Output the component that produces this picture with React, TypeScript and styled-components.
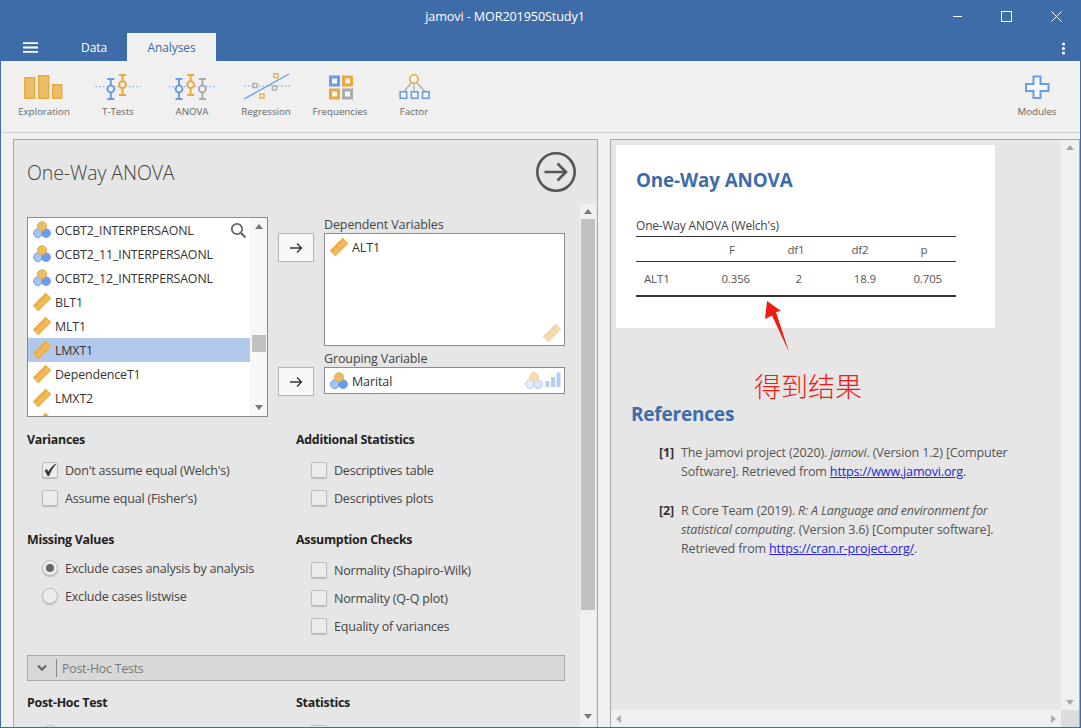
import React from "react";
import styled, { createGlobalStyle } from "styled-components";

const BLUE = "#3e6ca8";
const ORANGE = "#e9a93f";
const ORANGE_FILL = "#ebbd68";
const ICON_BLUE = "#6b9ce8";
const GREY = "#ababab";
const FONT = `"Open Sans", "Noto Sans", "Liberation Sans", sans-serif`;

const Global = createGlobalStyle`
  html, body { margin: 0; padding: 0; background: #f0f0f0; }
  body { font-family: ${FONT}; }
  * { box-sizing: border-box; }
`;

const Window = styled.div`
  width: 1081px;
  height: 728px;
  display: flex;
  flex-direction: column;
  overflow: hidden;
  border: 1px solid ${BLUE};
  border-top: none;
  background: #f0f0f0;
`;

const TitleBar = styled.div`
  height: 33px;
  background: ${BLUE};
  margin: 0 -1px;
  display: flex;
  align-items: center;
  position: relative;
  justify-content: center;
  padding-right: 71px;
  color: #fff;
  font-size: 12.6px;
  letter-spacing: -0.1px;
`;

const WindowButtons = styled.div`
  position: absolute;
  right: 0;
  top: 0;
  display: flex;
`;

const WindowButton = styled.div`
  width: 49.5px;
  height: 33px;
  display: flex;
  align-items: center;
  justify-content: center;
`;

const TabBar = styled.div`
  height: 28px;
  background: ${BLUE};
  margin: 0 -1px;
  display: flex;
  align-items: stretch;
  position: relative;
`;

const Hamburger = styled.div`
  width: 61px;
  display: flex;
  align-items: center;
  justify-content: center;
`;

const Tab = styled.div<{ $active?: boolean }>`
  width: ${(p) => (p.$active ? 89 : 66)}px;
  display: flex;
  align-items: center;
  justify-content: center;
  font-size: 12px;
  letter-spacing: -0.1px;
  color: ${(p) => (p.$active ? BLUE : "#fff")};
  background: ${(p) => (p.$active ? "#f0f0f0" : "transparent")};
`;

const Kebab = styled.div`
  position: absolute;
  right: 15px;
  top: 9px;
  display: flex;
`;

const Ribbon = styled.div`
  height: 72px;
  flex-shrink: 0;
  display: flex;
  padding: 0 6px;
  background: #f0f0f0;
  border-bottom: 1px solid #cfcfcf;
`;

const RibbonItem = styled.div`
  width: 74px;
  padding-top: 9px;
  display: flex;
  flex-direction: column;
  align-items: center;
  color: #666;
  font-size: 9.8px;
  line-height: 14px;
  letter-spacing: -0.05px;
  white-space: nowrap;
  svg { display: block; margin-bottom: 3px; }
`;

const RibbonSpacer = styled.div`
  flex: 1;
`;

const Main = styled.div`
  flex: 1;
  min-height: 0;
  display: flex;
  padding: 6px 0 0 12px;
  gap: 12px;
`;

const OptionsPanel = styled.section`
  width: 585px;
  display: flex;
  flex-direction: column;
  background: #e6e6e6;
  border: 1px solid #aaa;
  border-bottom: none;
  overflow: hidden;
`;

const OptionsHeader = styled.header`
  height: 64px;
  flex-shrink: 0;
  display: flex;
  align-items: center;
  justify-content: space-between;
  padding: 0 20px 1px 13px;
`;

const PanelTitle = styled.h1`
  margin: 1px 0 0;
  font-size: 19.5px;
  font-weight: 300;
  color: #444;
  letter-spacing: -0.1px;
`;

const OptionsBody = styled.div`
  flex: 1;
  min-height: 0;
  display: flex;
`;

const OptionsContent = styled.div`
  width: 567px;
  padding: 13px 0 0 13px;
  overflow: hidden;
`;

const ScrollTrack = styled.div`
  width: 16px;
  position: relative;
  background: #f0f0f0;
  margin-right: 1px;
`;

const ScrollThumb = styled.div<{ $top: number; $h: number; $x?: number }>`
  position: absolute;
  left: ${(p) => p.$x ?? 1}px;
  right: 1px;
  top: ${(p) => p.$top}px;
  height: ${(p) => p.$h}px;
  background: #c1c1c1;
`;

const ArrowGlyph = styled.div<{ $dir: "up" | "down" | "left" | "right"; $pos: string }>`
  position: absolute;
  width: 0;
  height: 0;
  ${(p) => p.$pos};
  border-style: solid;
  ${(p) =>
    p.$dir === "up"
      ? "border-width: 0 4px 5px 4px; border-color: transparent transparent #777 transparent;"
      : p.$dir === "down"
      ? "border-width: 5px 4px 0 4px; border-color: #777 transparent transparent transparent;"
      : p.$dir === "right"
      ? "border-width: 4px 0 4px 5px; border-color: transparent transparent transparent #aaa;"
      : "border-width: 4px 5px 4px 0; border-color: transparent #aaa transparent transparent;"}
`;

const VariableArea = styled.div`
  display: flex;
  gap: 10px;
  align-items: flex-start;
`;

const VariableList = styled.div`
  width: 241px;
  height: 200px;
  position: relative;
  overflow: hidden;
  border: 1px solid #8c8c8c;
  background: #fff;
`;

const VarRow = styled.div<{ $selected?: boolean }>`
  width: 222px;
  height: 24px;
  display: flex;
  align-items: center;
  gap: 4px;
  padding-left: 5px;
  font-size: 12.4px;
  letter-spacing: -0.12px;
  color: #333;
  background: ${(p) => (p.$selected ? "#b3c9ec" : "transparent")};
  white-space: nowrap;
`;

const ListScroll = styled.div`
  position: absolute;
  right: 0;
  top: 0;
  bottom: 0;
  width: 17px;
  background: #f7f7f7;
`;

const SearchSpot = styled.div`
  position: absolute;
  left: 202px;
  top: 4px;
  display: flex;
`;

const Targets = styled.div`
  display: grid;
  grid-template-columns: 36px 241px;
  column-gap: 10px;
  margin-top: -1px;
`;

const TargetLabel = styled.div`
  grid-column: 2;
  height: 17px;
  line-height: 18px;
  font-size: 12.5px;
  letter-spacing: -0.12px;
  color: #444;
`;

const TransferButton = styled.div`
  grid-column: 1;
  height: 29px;
  display: flex;
  align-items: center;
  justify-content: center;
  background: #f8f8f8;
  border: 1px solid #b4b4b4;
  color: #333;
`;

const TargetBox = styled.div<{ $h: number; $mb?: number }>`
  grid-column: 2;
  height: ${(p) => p.$h}px;
  margin-bottom: ${(p) => p.$mb ?? 0}px;
  position: relative;
  display: flex;
  align-items: flex-start;
  gap: 4px;
  padding: 4px 5px;
  background: #fff;
  border: 1px solid #8c8c8c;
  font-size: 12.5px;
  letter-spacing: -0.12px;
  color: #333;
  line-height: 20px;
`;

const BoxHint = styled.div<{ $top: number }>`
  position: absolute;
  right: 3px;
  top: ${(p) => p.$top}px;
  display: flex;
  gap: 2px;
  opacity: 0.5;
`;

const SectionGrid = styled.div<{ $mt?: number }>`
  display: grid;
  grid-template-columns: 269px 269px;
  row-gap: 19px;
  margin-top: ${(p) => p.$mt ?? 14}px;
`;

const Section = styled.div``;

const SectionTitle = styled.div`
  height: 16px;
  line-height: 18px;
  font-size: 12.4px;
  font-weight: 700;
  letter-spacing: -0.27px;
  color: #222;
`;

const OptionGroup = styled.div<{ $mt: number }>`
  margin-top: ${(p) => p.$mt}px;
  padding-left: 15px;
`;

const OptionRow = styled.div`
  height: 28px;
  display: flex;
  align-items: center;
  gap: 7px;
  font-size: 12.5px;
  letter-spacing: -0.2px;
  color: #444;
  white-space: nowrap;
`;

const CheckBox = styled.div`
  width: 16px;
  height: 16px;
  flex-shrink: 0;
  border: 1px solid #bdbdbd;
  border-radius: 2px;
  background: #ececec;
  box-shadow: 0 1px 1px #bbb;
  display: flex;
  align-items: center;
  justify-content: center;
`;

const Radio = styled.div<{ $on?: boolean }>`
  width: 16px;
  height: 16px;
  flex-shrink: 0;
  border: 1px solid #bdbdbd;
  border-radius: 50%;
  background: #ececec;
  box-shadow: 0 1px 1px #bbb;
  display: flex;
  align-items: center;
  justify-content: center;
  &::after {
    content: "";
    display: ${(p) => (p.$on ? "block" : "none")};
    width: 8px;
    height: 8px;
    border-radius: 50%;
    background: #666;
  }
`;

const CollapseBar = styled.div`
  width: 538px;
  height: 26px;
  margin-top: 15px;
  display: flex;
  align-items: center;
  background: #d8d8d8;
  border: 1px solid #aaa;
  color: #777;
  font-size: 12.3px;
  letter-spacing: -0.2px;
`;

const CollapseChevron = styled.div`
  width: 29px;
  height: 18px;
  margin-right: 5px;
  display: flex;
  align-items: center;
  justify-content: center;
  border-right: 1px solid #888;
`;

const ResultsPanel = styled.section`
  flex: 1;
  min-width: 0;
  display: flex;
  flex-direction: column;
  border-left: 1px solid #aaa;
  border-top: 1px solid #aaa;
  border-right: 1px solid #aaa;
  background: #e6e6e6;
`;

const ResultsRow = styled.div`
  flex: 1;
  min-height: 0;
  display: flex;
`;

const ResultsScroll = styled.div`
  flex: 1;
  position: relative;
  padding: 5px 0 0 5px;
  overflow: hidden;
`;

const VScroll = styled.div`
  width: 18px;
  position: relative;
  background: #f0f0f0;
`;

const HScroll = styled.div`
  height: 17px;
  display: flex;
  background: #f0f0f0;
`;

const HTrack = styled.div`
  flex: 1;
  position: relative;
`;

const ScrollCorner = styled.div`
  width: 18px;
  background: #dcdcdc;
`;

const Card = styled.article`
  width: 379px;
  height: 183px;
  padding: 22px 0 0 20px;
  background: #fff;
`;

const ResultTitle = styled.h2`
  margin: 0;
  height: 26px;
  line-height: 26px;
  font-size: 18.8px;
  font-weight: 700;
  color: ${BLUE};
  letter-spacing: -0.1px;
`;

const TableCaption = styled.div`
  margin-top: 25px;
  height: 18px;
  line-height: 16px;
  font-size: 12px;
  letter-spacing: -0.2px;
  color: #444;
`;

const Table = styled.table`
  width: 320px;
  table-layout: fixed;
  border-collapse: collapse;
  font-size: 11.5px;
  letter-spacing: -0.15px;
  color: #555;
`;

const Th = styled.th`
  height: 25px;
  padding: 0;
  font-weight: 400;
  text-align: center;
  border-top: 1px solid #333;
  border-bottom: 1px solid #333;
`;

const Td = styled.td<{ $pad: number; $left?: boolean }>`
  height: 34px;
  padding: 0 ${(p) => (p.$left ? 0 : p.$pad)}px 0 ${(p) => (p.$left ? p.$pad : 0)}px;
  text-align: ${(p) => (p.$left ? "left" : "right")};
  border-bottom: 2px solid #333;
`;

const RefHeading = styled.h2`
  margin: 73px 0 0 15px;
  height: 26px;
  line-height: 26px;
  font-size: 19px;
  font-weight: 700;
  letter-spacing: -0.2px;
  color: ${BLUE};
`;

const RefList = styled.div`
  margin: 16px 0 0 43px;
  display: flex;
  flex-direction: column;
  gap: 20px;
`;

const RefItem = styled.div`
  display: grid;
  grid-template-columns: 22px 1fr;
  font-size: 12.55px;
  line-height: 19px;
  letter-spacing: -0.17px;
  color: #555;
  white-space: nowrap;
`;

const RefNum = styled.b`
  color: #333;
`;

const RefLink = styled.a`
  color: #2323e0;
  text-decoration: underline;
`;

const AnnotationArrow = styled.svg`
  position: absolute;
  left: 153px;
  top: 160px;
`;

const AnnotationText = styled.div`
  position: absolute;
  left: 143px;
  top: 226px;
  font-family: "Noto Sans CJK SC", sans-serif;
  font-size: 27px;
  font-weight: 300;
  line-height: 40px;
  color: #f01c14;
  white-space: nowrap;
`;

/* ---------- icons ---------- */

const Nominal = ({ faded }: { faded?: boolean }) => (
  <svg width="18" height="18" viewBox="0 0 18 18" style={{ flexShrink: 0 }}>
    <circle cx="4.9" cy="12.2" r="4.3" fill={faded ? "#cfdff7" : "#a9c6f2"} stroke={ICON_BLUE} strokeWidth="1" />
    <circle cx="13.1" cy="12.2" r="4.3" fill={faded ? "#b7cff4" : ICON_BLUE} stroke={ICON_BLUE} strokeWidth="1" />
    <circle cx="9" cy="5.2" r="4.5" fill={ORANGE_FILL} stroke={ORANGE} strokeWidth="1" />
  </svg>
);

const Ruler = () => (
  <svg width="18" height="18" viewBox="0 0 18 18" style={{ flexShrink: 0, overflow: "visible" }}>
    <g transform="rotate(-45 9 9)">
      <rect x="0.4" y="5.6" width="17.2" height="6.8" fill="#f0b95e" stroke={ORANGE} strokeWidth="1" />
      <path d="M3 5.6v2.6M5.5 5.6v1.6M8 5.6v2.6M10.5 5.6v1.6M13 5.6v2.6M15.5 5.6v1.6" stroke="#cf8f24" strokeWidth="0.8" fill="none" />
    </g>
  </svg>
);

const BarsHint = () => (
  <svg width="16" height="15" viewBox="0 0 16 15">
    <rect x="0.5" y="9" width="4" height="6" fill={ICON_BLUE} />
    <rect x="6" y="5" width="4" height="10" fill={ICON_BLUE} />
    <rect x="11.5" y="0.5" width="4" height="14.5" fill={ICON_BLUE} />
  </svg>
);

const Whisker = ({ x, top, bot, cy, color }: { x: number; top: number; bot: number; cy: number; color: string }) => (
  <g stroke={color} strokeWidth="2" fill="none">
    <path d={`M${x - 3.5} ${top}H${x + 3.5}M${x - 3.5} ${bot}H${x + 3.5}M${x} ${top}V${bot}`} />
    <circle cx={x} cy={cy} r="3.4" fill="#f4f4f4" />
  </g>
);

const Dotted = ({ x1, x2, y }: { x1: number; x2: number; y: number }) => (
  <line x1={x1} x2={x2} y1={y} y2={y} stroke={ICON_BLUE} strokeWidth="1" strokeDasharray="1.5 2.2" />
);

const ExplorationIcon = () => (
  <svg width="50" height="32" viewBox="19 70 50 32">
    <g fill={ORANGE_FILL} stroke={ORANGE} strokeWidth="1.4">
      <rect x="24.7" y="77.7" width="10" height="20.6" />
      <rect x="38.7" y="75.7" width="10" height="22.6" />
      <rect x="52.7" y="84.7" width="9" height="13.6" />
    </g>
  </svg>
);

const TTestIcon = () => (
  <svg width="50" height="32" viewBox="92.5 70 50 32">
    <Dotted x1={95} x2={140} y={86.7} />
    <Whisker x={110.3} top={79} bot={99} cy={89} color={ICON_BLUE} />
    <Whisker x={122} top={75} bot={95} cy={84.7} color={ORANGE} />
  </svg>
);

const AnovaIcon = () => (
  <svg width="50" height="32" viewBox="167 70 50 32">
    <Dotted x1={169} x2={215} y={86.7} />
    <Whisker x={179} top={79} bot={99} cy={89} color={ICON_BLUE} />
    <Whisker x={190.6} top={75} bot={95} cy={84.7} color={ORANGE} />
    <Whisker x={202.4} top={79} bot={99} cy={89} color={GREY} />
  </svg>
);

const Sq = ({ cx, cy, s, color, w = 1.4 }: { cx: number; cy: number; s: number; color: string; w?: number }) => (
  <rect x={cx - s / 2} y={cy - s / 2} width={s} height={s} fill="#f6f6f6" stroke={color} strokeWidth={w} />
);

const RegressionIcon = () => (
  <svg width="50" height="32" viewBox="241 70 50 32">
    <Dotted x1={244} x2={290} y={86} />
    <line x1={244} y1={99} x2={289} y2={74} stroke={ICON_BLUE} strokeWidth="1.4" />
    <Sq cx={255} cy={85.5} s={4} color={GREY} />
    <Sq cx={276} cy={75.7} s={4} color={ORANGE} />
    <Sq cx={274.5} cy={88} s={4} color={GREY} />
    <Sq cx={262} cy={96} s={4} color={ORANGE} />
  </svg>
);

const FrequenciesIcon = () => (
  <svg width="50" height="32" viewBox="315 70 50 32">
    <Sq cx={334.5} cy={81} s={8} color={ICON_BLUE} w={3} />
    <Sq cx={347.5} cy={81} s={8} color={ORANGE} w={3} />
    <Sq cx={334.5} cy={94} s={8} color={ORANGE} w={3} />
    <Sq cx={347.5} cy={94} s={8} color={GREY} w={3} />
  </svg>
);

const FactorIcon = () => (
  <svg width="50" height="32" viewBox="389 70 50 32">
    <path d="M414 80L403.5 92M414 80V92M414 80L425.5 92" stroke={GREY} strokeWidth="1.2" fill="none" />
    <circle cx="414" cy="79" r="4.2" fill="#f6f6f6" stroke={ORANGE} strokeWidth="1.6" />
    <Sq cx={403.4} cy={95} s={6.5} color={ICON_BLUE} w={1.6} />
    <Sq cx={414.6} cy={95} s={6.5} color={ICON_BLUE} w={1.6} />
    <Sq cx={425.8} cy={95} s={6.5} color={ICON_BLUE} w={1.6} />
  </svg>
);

const ModulesIcon = () => (
  <svg width="50" height="32" viewBox="1012 70 50 32">
    <path
      d="M1033.5 76.5h7v7.5h8v7h-8v7h-7v-7h-7.5v-7h7.5z"
      fill="#f8f8f8"
      stroke={ICON_BLUE}
      strokeWidth="2"
    />
  </svg>
);

const ArrowRight = () => (
  <svg width="14" height="12" viewBox="0 0 14 12">
    <path d="M1 6H12.5M8 1.5L12.5 6L8 10.5" stroke="#333" strokeWidth="1.3" fill="none" />
  </svg>
);

const RunIcon = () => (
  <svg width="42" height="42" viewBox="0 0 42 42">
    <circle cx="21" cy="21" r="18.7" fill="none" stroke="#555" strokeWidth="2.6" />
    <path d="M9.5 21H31M22.5 12.5L31 21L22.5 29.5" fill="none" stroke="#555" strokeWidth="2.6" />
  </svg>
);

const SearchIcon = () => (
  <svg width="17" height="17" viewBox="0 0 17 17">
    <circle cx="7" cy="7" r="5.2" fill="none" stroke="#666" strokeWidth="1.8" />
    <path d="M11 11L15.5 15.5" stroke="#666" strokeWidth="2.2" />
  </svg>
);

const Tick = () => (
  <svg width="14" height="14" viewBox="0 0 14 14">
    <path d="M1.6 7.6L3.8 5.9L5.4 8.4C7 5.4 9.4 2.8 12.6 0.8L13 1.4C10 4.4 7.8 8.4 6.2 13H4.6Z" fill="#3a3a3a" />
  </svg>
);

const Chevron = () => (
  <svg width="10" height="8" viewBox="0 0 10 8">
    <path d="M1 1.5L5 5.8L9 1.5" stroke="#666" strokeWidth="2" fill="none" />
  </svg>
);

/* ---------- data ---------- */

const listVars = [
  { name: "OCBT2_INTERPERSAONL", kind: "n" },
  { name: "OCBT2_11_INTERPERSAONL", kind: "n" },
  { name: "OCBT2_12_INTERPERSAONL", kind: "n" },
  { name: "BLT1", kind: "c" },
  { name: "MLT1", kind: "c" },
  { name: "LMXT1", kind: "c", selected: true },
  { name: "DependenceT1", kind: "c" },
  { name: "LMXT2", kind: "c" },
  { name: "", kind: "c" },
];

const Check = ({ label, on }: { label: string; on?: boolean }) => (
  <OptionRow>
    <CheckBox>{on && <Tick />}</CheckBox>
    {label}
  </OptionRow>
);

const Option = ({ label, on }: { label: string; on?: boolean }) => (
  <OptionRow>
    <Radio $on={on} />
    {label}
  </OptionRow>
);

export default function App() {
  return (
    <Window>
      <Global />
      <TitleBar>
        jamovi - MOR201950Study1
        <WindowButtons>
          <WindowButton>
            <svg width="11" height="11" viewBox="0 0 11 11"><path d="M1 5.5H10" stroke="#fff" strokeWidth="1" /></svg>
          </WindowButton>
          <WindowButton>
            <svg width="11" height="11" viewBox="0 0 11 11"><rect x="0.5" y="0.5" width="10" height="10" fill="none" stroke="#fff" strokeWidth="1" /></svg>
          </WindowButton>
          <WindowButton>
            <svg width="11" height="11" viewBox="0 0 11 11"><path d="M0.5 0.5L10.5 10.5M10.5 0.5L0.5 10.5" stroke="#fff" strokeWidth="1" /></svg>
          </WindowButton>
        </WindowButtons>
      </TitleBar>
      <TabBar>
        <Hamburger>
          <svg width="15" height="11" viewBox="0 0 15 11"><path d="M0 1.2H15M0 5.5H15M0 9.8H15" stroke="#fff" strokeWidth="1.8" /></svg>
        </Hamburger>
        <Tab>Data</Tab>
        <Tab $active>Analyses</Tab>
        <Kebab>
          <svg width="5" height="13" viewBox="0 0 5 13">
            <circle cx="2.5" cy="2" r="1.6" fill="#fff" />
            <circle cx="2.5" cy="6.5" r="1.6" fill="#fff" />
            <circle cx="2.5" cy="11" r="1.6" fill="#fff" />
          </svg>
        </Kebab>
      </TabBar>
      <Ribbon>
        <RibbonItem><ExplorationIcon />Exploration</RibbonItem>
        <RibbonItem><TTestIcon />T-Tests</RibbonItem>
        <RibbonItem><AnovaIcon />ANOVA</RibbonItem>
        <RibbonItem><RegressionIcon />Regression</RibbonItem>
        <RibbonItem><FrequenciesIcon />Frequencies</RibbonItem>
        <RibbonItem><FactorIcon />Factor</RibbonItem>
        <RibbonSpacer />
        <RibbonItem><ModulesIcon />Modules</RibbonItem>
      </Ribbon>
      <Main>
        <OptionsPanel>
          <OptionsHeader>
            <PanelTitle>One-Way ANOVA</PanelTitle>
            <RunIcon />
          </OptionsHeader>
          <OptionsBody>
            <OptionsContent>
              <VariableArea>
                <VariableList>
                  {listVars.map((v, i) => (
                    <VarRow key={i} $selected={v.selected}>
                      {v.kind === "n" ? <Nominal /> : <Ruler />}
                      {v.name}
                    </VarRow>
                  ))}
                  <SearchSpot><SearchIcon /></SearchSpot>
                  <ListScroll>
                    <ArrowGlyph $dir="up" $pos="left: 5px; top: 6px;" />
                    <ScrollThumb $top={117} $h={17} $x={2} />
                    <ArrowGlyph $dir="down" $pos="left: 5px; bottom: 6px;" />
                  </ListScroll>
                </VariableList>
                <Targets>
                  <TargetLabel>Dependent Variables</TargetLabel>
                  <TransferButton><ArrowRight /></TransferButton>
                  <TargetBox $h={113} $mb={4} style={{ gridRow: "2 / span 1" }}>
                    <Ruler />
                    ALT1
                    <BoxHint $top={90}><Ruler /></BoxHint>
                  </TargetBox>
                  <TargetLabel>Grouping Variable</TargetLabel>
                  <TransferButton><ArrowRight /></TransferButton>
                  <TargetBox $h={27}>
                    <Nominal />
                    Marital
                    <BoxHint $top={4}><Nominal faded /><BarsHint /></BoxHint>
                  </TargetBox>
                </Targets>
              </VariableArea>

              <SectionGrid>
                <Section>
                  <SectionTitle>Variances</SectionTitle>
                  <OptionGroup $mt={9}>
                    <Check label="Don't assume equal (Welch's)" on />
                    <Check label="Assume equal (Fisher's)" />
                  </OptionGroup>
                </Section>
                <Section>
                  <SectionTitle>Additional Statistics</SectionTitle>
                  <OptionGroup $mt={9}>
                    <Check label="Descriptives table" />
                    <Check label="Descriptives plots" />
                  </OptionGroup>
                </Section>
                <Section>
                  <SectionTitle>Missing Values</SectionTitle>
                  <OptionGroup $mt={7}>
                    <Option label="Exclude cases analysis by analysis" on />
                    <Option label="Exclude cases listwise" />
                  </OptionGroup>
                </Section>
                <Section>
                  <SectionTitle>Assumption Checks</SectionTitle>
                  <OptionGroup $mt={9}>
                    <Check label="Normality (Shapiro-Wilk)" />
                    <Check label="Normality (Q-Q plot)" />
                    <Check label="Equality of variances" />
                  </OptionGroup>
                </Section>
              </SectionGrid>

              <CollapseBar>
                <CollapseChevron><Chevron /></CollapseChevron>
                Post-Hoc Tests
              </CollapseBar>

              <SectionGrid $mt={13}>
                <Section>
                  <SectionTitle>Post-Hoc Test</SectionTitle>
                  <OptionGroup $mt={9}>
                    <Option label="" />
                  </OptionGroup>
                </Section>
                <Section>
                  <SectionTitle>Statistics</SectionTitle>
                  <OptionGroup $mt={9}>
                    <Check label="" />
                  </OptionGroup>
                </Section>
              </SectionGrid>
            </OptionsContent>
            <ScrollTrack>
              <ArrowGlyph $dir="up" $pos="left: 4px; top: 5px;" />
              <ScrollThumb $top={15} $h={391} />
              <ArrowGlyph $dir="down" $pos="left: 4px; bottom: 8px;" />
            </ScrollTrack>
          </OptionsBody>
        </OptionsPanel>

        <ResultsPanel>
          <ResultsRow>
            <ResultsScroll>
              <Card>
                <ResultTitle>One-Way ANOVA</ResultTitle>
                <TableCaption>One-Way ANOVA (Welch's)</TableCaption>
                <Table>
                  <thead>
                    <tr>
                      <Th />
                      <Th>F</Th>
                      <Th>df1</Th>
                      <Th>df2</Th>
                      <Th>p</Th>
                    </tr>
                  </thead>
                  <tbody>
                    <tr>
                      <Td $pad={8} $left>ALT1</Td>
                      <Td $pad={14}>0.356</Td>
                      <Td $pad={26}>2</Td>
                      <Td $pad={16}>18.9</Td>
                      <Td $pad={14}>0.705</Td>
                    </tr>
                  </tbody>
                </Table>
              </Card>
              <RefHeading>References</RefHeading>
              <RefList>
                <RefItem>
                  <RefNum>[1]</RefNum>
                  <div>
                    The jamovi project (2020). <i>jamovi</i>. (Version 1.2) [Computer<br />
                    Software]. Retrieved from <RefLink href="#">https://www.jamovi.org</RefLink>.
                  </div>
                </RefItem>
                <RefItem>
                  <RefNum>[2]</RefNum>
                  <div>
                    R Core Team (2019). <i>R: A Language and environment for</i><br />
                    <i>statistical computing</i>. (Version 3.6) [Computer software].<br />
                    Retrieved from <RefLink href="#">https://cran.r-project.org/</RefLink>.
                  </div>
                </RefItem>
              </RefList>
              <AnnotationArrow width="28" height="54" viewBox="764 300 28 54">
                <polygon points="767,301 781,311 776,312 789,352 772,315.5 765,319" fill="#f01c14" />
              </AnnotationArrow>
              <AnnotationText>得到结果</AnnotationText>
            </ResultsScroll>
            <VScroll>
              <ArrowGlyph $dir="up" $pos="left: 5px; top: 5px; opacity: .6;" />
              <ArrowGlyph $dir="down" $pos="left: 5px; bottom: 5px; opacity: .6;" />
            </VScroll>
          </ResultsRow>
          <HScroll>
            <HTrack>
              <ArrowGlyph $dir="left" $pos="left: 5px; top: 5px;" />
              <ArrowGlyph $dir="right" $pos="right: 5px; top: 5px;" />
            </HTrack>
            <ScrollCorner />
          </HScroll>
        </ResultsPanel>
      </Main>
    </Window>
  );
}
